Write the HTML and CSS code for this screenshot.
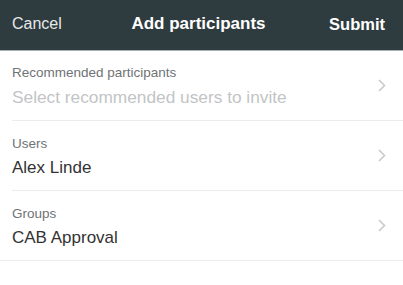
FILE: index.html
```html
<!DOCTYPE html>
<html>
<head>
<meta charset="utf-8">
<link rel="stylesheet" href="styles.css">
</head>
<body>
<header class="nav">
  <span class="nav-left">Cancel</span>
  <span class="nav-title">Add participants</span>
  <span class="nav-right">Submit</span>
</header>
<ul class="list">
  <li class="row">
    <div class="row-text">
      <div class="label">Recommended participants</div>
      <div class="value placeholder">Select recommended users to invite</div>
    </div>
    <svg class="chev" width="8" height="13" viewBox="0 0 8 13"><path d="M1 1l5.5 5.5L1 12" fill="none" stroke="#c7c7cc" stroke-width="1.5"/></svg>
  </li>
  <li class="row">
    <div class="row-text">
      <div class="label">Users</div>
      <div class="value">Alex Linde</div>
    </div>
    <svg class="chev" width="8" height="13" viewBox="0 0 8 13"><path d="M1 1l5.5 5.5L1 12" fill="none" stroke="#c7c7cc" stroke-width="1.5"/></svg>
  </li>
  <li class="row last">
    <div class="row-text">
      <div class="label">Groups</div>
      <div class="value">CAB Approval</div>
    </div>
    <svg class="chev" width="8" height="13" viewBox="0 0 8 13"><path d="M1 1l5.5 5.5L1 12" fill="none" stroke="#c7c7cc" stroke-width="1.5"/></svg>
  </li>
</ul>
</body>
</html>
```
FILE: styles.css
```css
* { box-sizing: border-box; }
html, body { margin: 0; padding: 0; background: #fff; }
body { font-family: "Liberation Sans", Arial, sans-serif; width: 403px; height: 285px; overflow: hidden; }
.nav {
  height: 51px;
  background: #2e3b3f;
  border-bottom: 1px solid #a9b0b2;
  display: grid;
  grid-template-columns: 1fr auto 1fr;
  align-items: center;
  padding: 0 18px 2px 12px;
  color: #fff;
}
.nav-left { font-size: 16px; color: #e6e9ea; }
.nav-title { font-size: 17px; font-weight: 600; color: #fff; }
.nav-right { justify-self: end; font-size: 16.5px; font-weight: bold; }
.list { list-style: none; margin: 0; padding: 0 0 0 12px; }
.row {
  height: 70px;
  display: flex;
  align-items: center;
  padding-right: 17px;
  border-bottom: 1px solid #ececec;
}
.row.last { margin-left: -12px; padding-left: 12px; }
.row-text { flex: 1; display: flex; flex-direction: column; gap: 7px; padding-top: 2px; }
.label { font-size: 13.5px; color: #6f7375; }
.value { font-size: 17px; color: #333; }
.value.placeholder { font-size: 17.3px; color: #c2c4c6; }
.chev { display: block; }
```
